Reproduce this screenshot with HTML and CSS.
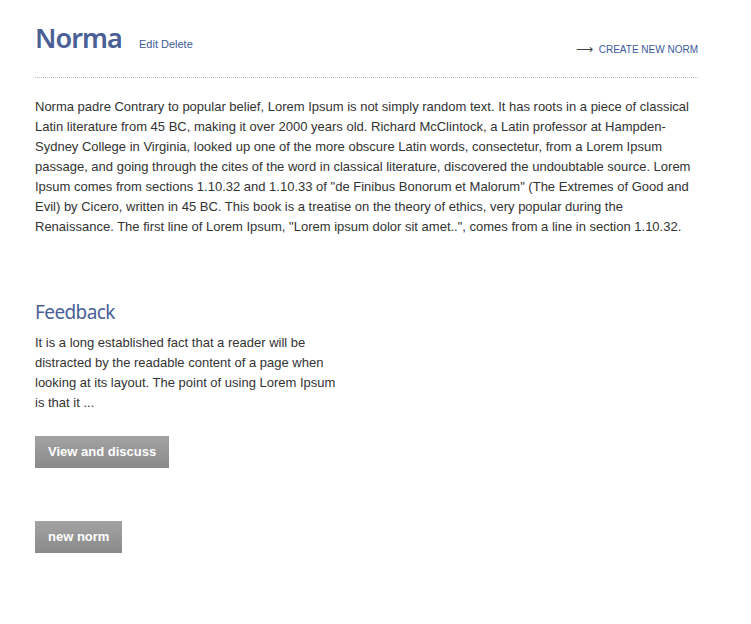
FILE: index.html
```html
<!DOCTYPE html>
<html>
<head>
<meta charset="utf-8">
<link rel="stylesheet" href="styles.css">
</head>
<body>
<div class="page">
  <header class="head">
    <div class="title-group">
      <h1 class="title">Norma</h1>
      <a class="small-link" href="#">Edit</a> <a class="small-link" href="#">Delete</a>
    </div>
    <a class="create" href="#"><span class="arrow">&#10230;</span>CREATE NEW NORM</a>
  </header>
  <p class="body-text">Norma padre Contrary to popular belief, Lorem Ipsum is not simply random text. It has roots in a piece of classical Latin literature from 45 BC, making it over 2000 years old. Richard McClintock, a Latin professor at Hampden-Sydney College in Virginia, looked up one of the more obscure Latin words, consectetur, from a Lorem Ipsum passage, and going through the cites of the word in classical literature, discovered the undoubtable source. Lorem Ipsum comes from sections 1.10.32 and 1.10.33 of "de Finibus Bonorum et Malorum" (The Extremes of Good and Evil) by Cicero, written in 45 BC. This book is a treatise on the theory of ethics, very popular during the Renaissance. The first line of Lorem Ipsum, "Lorem ipsum dolor sit amet..", comes from a line in section 1.10.32.</p>
  <section class="feedback">
    <h2 class="sub">Feedback</h2>
    <p class="fb-text">It is a long established fact that a reader will be distracted by the readable content of a page when looking at its layout. The point of using Lorem Ipsum is that it ...</p>
    <a class="btn" href="#">View and discuss</a>
  </section>
  <a class="btn btn-new" href="#">new norm</a>
</div>
</body>
</html>
```

FILE: styles.css
```css
html, body {
  margin: 0;
  padding: 0;
  background: #fff;
}
body {
  font-family: "Liberation Sans", Arial, sans-serif;
  color: #333;
}
.page {
  width: 663px;
  margin-left: 35px;
  padding-top: 20px;
}
.head {
  display: flex;
  justify-content: space-between;
  align-items: flex-end;
  border-bottom: 1px dotted #bbb;
  padding-bottom: 21px;
}
.title-group {
  display: flex;
  align-items: baseline;
  gap: 3px;
}
.title {
  font-family: "Noto Sans", "Open Sans", sans-serif;
  font-size: 27px;
  font-weight: 600;
  letter-spacing: -0.9px;
  color: #4a5f96;
  margin: 0 14px 0 0;
  line-height: 36px;
}
.small-link {
  font-size: 11px;
  color: #3a5a9a;
  text-decoration: none;
}
.create {
  font-size: 10px;
  color: #3a5a9a;
  text-decoration: none;
  margin-bottom: 0;
}
.arrow {
  font-size: 12px;
  margin-right: 6px;
  color: #444;
}
.body-text {
  font-size: 13px;
  line-height: 20px;
  margin: 19px 0 0 0;
  color: #333;
}
.feedback {
  margin-top: 62px;
}
.sub {
  font-family: "Noto Sans", "Open Sans", sans-serif;
  font-weight: 400;
  font-size: 19px;
  letter-spacing: -0.6px;
  color: #4a5f96;
  margin: 0;
  line-height: 26px;
}
.fb-text {
  width: 310px;
  font-size: 13px;
  line-height: 20px;
  margin: 8px 0 0 0;
}
.btn {
  display: inline-block;
  height: 32px;
  line-height: 32px;
  padding: 0 13px;
  font-size: 13px;
  font-weight: bold;
  color: #fff;
  text-decoration: none;
  background: linear-gradient(#a3a3a3, #8a8a8a);
}
.feedback .btn {
  margin-top: 23px;
}
.btn-new {
  margin-top: 53px;
}
```
